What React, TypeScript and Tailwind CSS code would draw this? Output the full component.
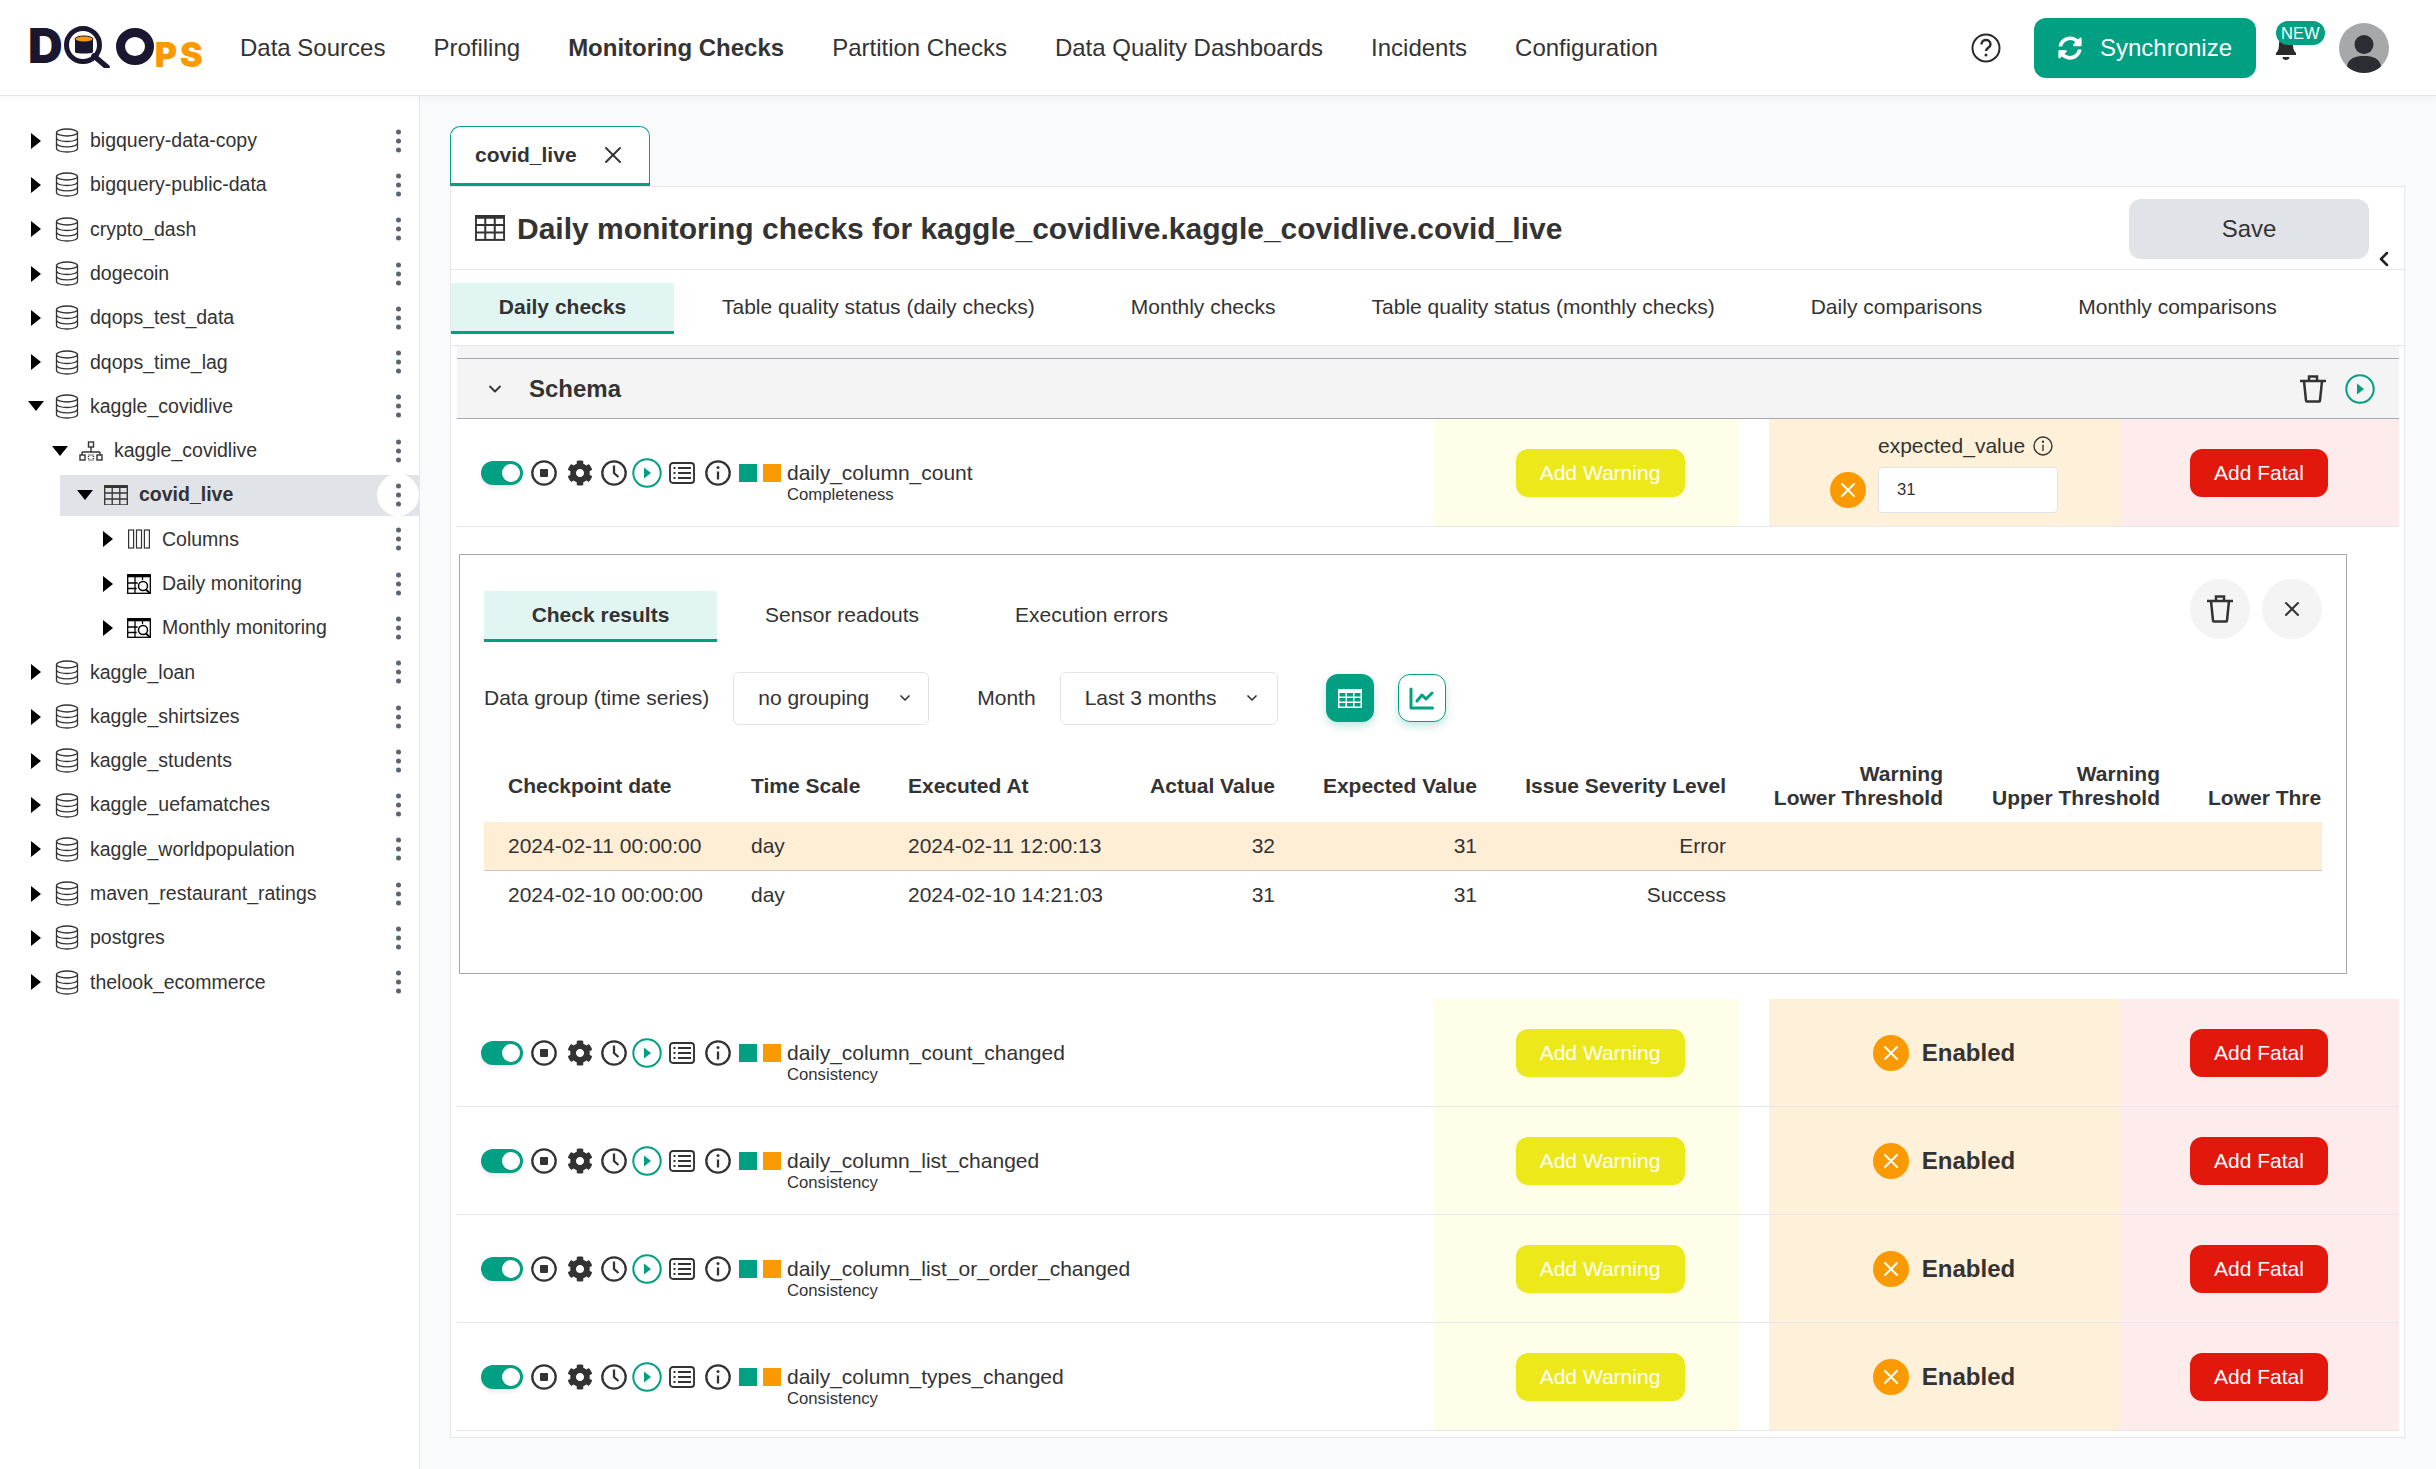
import React from "react";
import { ChevronDown, ChevronLeft, X } from "lucide-react";

const T = "#02a083";
const ff = "font-['Liberation_Sans',Arial,sans-serif]";

function Caret({ open }: { open?: boolean }) {
  return open ? (
    <svg width="16" height="10" viewBox="0 0 16 10" className="block"><path d="M0 0h16L8 10z" fill="#000" /></svg>
  ) : (
    <svg width="10" height="16" viewBox="0 0 10 16" className="block"><path d="M0 0v16l10-8z" fill="#000" /></svg>
  );
}
function Db() {
  return (
    <svg width="24" height="25" viewBox="0 0 24 25" fill="none" stroke="#333" strokeWidth="1.3">
      <ellipse cx="12" cy="4.500" rx="10.500" ry="3.500" />
      <path d="M1.500 4.500v16c0 2 4.700 3.500 10.500 3.500s10.500-1.500 10.500-3.500v-16" />
      <path d="M1.500 10c0 2 4.700 3.500 10.500 3.500S22.500 12 22.500 10M1.500 15.300c0 2 4.700 3.500 10.500 3.500s10.500-1.500 10.500-3.500" />
    </svg>
  );
}
function Schema() {
  return (
    <svg width="24" height="20" viewBox="0 0 24 20" fill="none" stroke="#333" strokeWidth="1.4">
      <rect x="9.500" y="1" width="5" height="5" />
      <path d="M12 6v5M3 11h18M3 11v3M21 11v3" />
      <rect x="1" y="14" width="5" height="5" /><rect x="18" y="14" width="5" height="5" />
      <path d="M9.500 14h5v5h-5z" strokeDasharray="1 1" />
    </svg>
  );
}
function TableIco({ w = 24, sw = 1.3 }: { w?: number; sw?: number }) {
  return (
    <svg width={w} height={w * 0.86} viewBox="0 0 24 20.600" fill="none" stroke="#333" strokeWidth={sw}>
      <rect x=".7" y=".7" width="22.600" height="19.200" />
      <path d="M.7 1.800h22.600" strokeWidth="2.400" />
      <path d="M.7 8h22.600M.7 14h22.600M8.200 1v19M15.800 1v19" />
    </svg>
  );
}
function SolidTable() {
  return (
    <svg width="24" height="19" viewBox="0 0 24 19">
      <rect width="24" height="19" fill="#fff" />
      {[0, 1, 2].map((r) =>
        [0, 1, 2].map((c) => <rect key={`${r}${c}`} x={1.500 + c * 7.500} y={4 + r * 5} width="6" height="3.500" fill={T} />)
      )}
    </svg>
  );
}
function ColumnsIco() {
  return (
    <svg width="22" height="20" viewBox="0 0 22 20" fill="none" stroke="#333" strokeWidth="1.200">
      <rect x=".6" y="1" width="5" height="18" /><rect x="8.500" y="1" width="5" height="18" /><rect x="16.400" y="1" width="5" height="18" />
    </svg>
  );
}
function MonIco() {
  return (
    <svg width="24" height="20" viewBox="0 0 24 20" fill="none" stroke="#000" strokeWidth="1.300">
      <rect x=".7" y=".7" width="22.600" height="18.600" />
      <path d="M.7 2h22.600" strokeWidth="2.600" />
      <path d="M.7 9h10M.7 14.500h9M8 1v18M15.500 1v5" />
      <circle cx="16" cy="12" r="4.500" fill="#fff" strokeWidth="1.500" />
      <path d="M19 15.500l4 4" strokeWidth="1.800" />
    </svg>
  );
}
function Dots() {
  return (
    <span className="flex flex-col gap-[4px]">
      <i className="block size-[5px] rounded-full bg-[#5b6470]" />
      <i className="block size-[5px] rounded-full bg-[#5b6470]" />
      <i className="block size-[5px] rounded-full bg-[#5b6470]" />
    </span>
  );
}

type Node = { l: number; t: string; open?: boolean; ic?: "db" | "schema" | "table" | "col" | "mon"; sel?: boolean };
const tree: Node[] = [
  { l: 0, t: "bigquery-data-copy" },
  { l: 0, t: "bigquery-public-data" },
  { l: 0, t: "crypto_dash" },
  { l: 0, t: "dogecoin" },
  { l: 0, t: "dqops_test_data" },
  { l: 0, t: "dqops_time_lag" },
  { l: 0, t: "kaggle_covidlive", open: true },
  { l: 1, t: "kaggle_covidlive", open: true, ic: "schema" },
  { l: 2, t: "covid_live", open: true, ic: "table", sel: true },
  { l: 3, t: "Columns", ic: "col" },
  { l: 3, t: "Daily monitoring", ic: "mon" },
  { l: 3, t: "Monthly monitoring", ic: "mon" },
  { l: 0, t: "kaggle_loan" },
  { l: 0, t: "kaggle_shirtsizes" },
  { l: 0, t: "kaggle_students" },
  { l: 0, t: "kaggle_uefamatches" },
  { l: 0, t: "kaggle_worldpopulation" },
  { l: 0, t: "maven_restaurant_ratings" },
  { l: 0, t: "postgres" },
  { l: 0, t: "thelook_ecommerce" },
];
const indent = ["pl-[26px]", "pl-[50px]", "pl-[74px]", "pl-[98px]"];

function Tree() {
  return (
    <aside className="w-[420px] shrink-0 border-r-[1.500px] border-[#e5e7eb] bg-white pt-[22.500px]">
      {tree.map((n, i) => (
        <div key={i} className="relative flex h-[44.300px] items-center">
          <div className={`flex h-[41px] flex-1 items-center ${n.sel ? "ml-[60px] bg-[#e0e3e8] pl-[15px]" : indent[n.l]}`}>
            <span className="flex w-[20px] shrink-0 justify-center"><Caret open={n.open} /></span>
            <span className="ml-[9px] flex w-[24px] shrink-0 justify-center">
              {n.ic === "schema" ? <Schema /> : n.ic === "table" ? <TableIco /> : n.ic === "col" ? <ColumnsIco /> : n.ic === "mon" ? <MonIco /> : <Db />}
            </span>
            <span className={`ml-[11px] text-[19.500px] text-[#333] ${n.sel ? "font-bold" : ""}`}>{n.t}</span>
          </div>
          {n.sel && <span className="absolute left-[377px] top-[1px] size-[42px] rounded-full bg-white" />}
          <span className="absolute left-[395.500px] top-1/2 -translate-y-1/2"><Dots /></span>
        </div>
      ))}
    </aside>
  );
}

function Logo() {
  return (
    <div className="ml-[28px] flex h-[40px] w-[175px] items-start font-['Inter',sans-serif] font-black">
      <span className="block h-[35px] text-[48px] leading-[35px] text-[#1b1730]">D</span>
      <svg width="50" height="42" viewBox="0 0 50 42" className="-mt-[2px] shrink-0">
        <circle cx="20" cy="19" r="16.500" fill="none" stroke="#1b1730" strokeWidth="5" />
        <path d="M31 30l13 11" stroke="#1b1730" strokeWidth="5.500" strokeLinecap="round" />
        <path d="M12 13h18v13c0 2-18 2-18 0z" fill="#1b1730" />
        <ellipse cx="21" cy="13" rx="9" ry="3" fill="#fb9a00" stroke="#1b1730" strokeWidth="1" />
      </svg>
      <svg width="38" height="37" viewBox="0 0 38 37" className="ml-[3px] shrink-0">
        <ellipse cx="19" cy="18.500" rx="14.500" ry="14" fill="none" stroke="#1b1730" strokeWidth="9" />
      </svg>
      <span className="ml-[1px] mt-[14px] block h-[25px] text-[34px] leading-[25px] tracking-[3px] text-[#fb9a00]">PS</span>
    </div>
  );
}

function Help() {
  return (
    <svg width="30" height="30" viewBox="0 0 30 30" fill="none" stroke="#2b2b2b" strokeWidth="2">
      <circle cx="15" cy="15" r="13.500" />
      <path d="M10.500 11.500c0-6 9-6 9 0 0 3.500-4.500 3-4.500 6.500" strokeWidth="2.400" />
      <circle cx="15" cy="22" r="1.500" fill="#2b2b2b" stroke="none" />
    </svg>
  );
}
function Sync() {
  return (
    <svg width="24" height="24" viewBox="0 0 512 512" fill="#fff">
      <path d="M370.720 133.280C339.458 104.008 298.888 87.962 255.848 88c-77.458.068-144.328 53.178-162.791 126.850-1.344 5.363-6.122 9.150-11.651 9.150H24.103c-7.498 0-13.194-6.807-11.807-14.176C33.933 94.924 134.813 8 256 8c66.448 0 126.791 26.136 171.315 68.685L463.030 40.970C478.149 25.851 504 36.559 504 57.941V192c0 13.255-10.745 24-24 24H345.941c-21.382 0-32.090-25.851-16.971-40.971l41.750-41.749zM32 296h134.059c21.382 0 32.090 25.851 16.971 40.971l-41.750 41.750c31.262 29.273 71.835 45.319 114.876 45.280 77.418-.070 144.315-53.144 162.787-126.849 1.344-5.363 6.122-9.150 11.651-9.150h57.304c7.498 0 13.194 6.807 11.807 14.176C478.067 417.076 377.187 504 256 504c-66.448 0-126.791-26.136-171.315-68.685L48.970 471.030C33.851 486.149 8 475.441 8 454.059V320c0-13.255 10.745-24 24-24z" />
    </svg>
  );
}
function Bell() {
  return (
    <svg width="22" height="30" viewBox="0 0 22 30" fill="#2b2b2b">
      <path d="M1 20c2-2 3-4 3-9 0-4 3-7 7-7s7 3 7 7c0 5 1 7 3 9v2H1z" />
      <path d="M7.500 24h7c0 4-7 4-7 0z" />
    </svg>
  );
}
function Avatar() {
  return (
    <svg width="50" height="50" viewBox="0 0 50 50">
      <circle cx="25" cy="25" r="25" fill="#a7a8aa" />
      <circle cx="25" cy="21.500" r="9.500" fill="#2c2c33" />
      <path d="M8 43.500c1-8 8-10.500 17-10.500s16 2.500 17 10.500A25 25 0 0 1 25 50 25 25 0 0 1 8 43.500z" fill="#2c2c33" />
    </svg>
  );
}

function Header() {
  const items = ["Data Sources", "Profiling", "Monitoring Checks", "Partition Checks", "Data Quality Dashboards", "Incidents", "Configuration"];
  return (
    <header className="relative z-10 flex h-[96px] items-center border-b-[1.500px] border-[#e5e7eb] bg-white shadow-[0_2px_8px_rgba(0,0,0,0.04)]">
      <Logo />
      <nav className="ml-[37px] flex gap-[48px]">
        {items.map((t) => (
          <span key={t} className={`text-[24px] text-[#333] ${t === "Monitoring Checks" ? "font-bold" : ""}`}>{t}</span>
        ))}
      </nav>
      <div className="ml-auto flex items-center">
        <Help />
        <button className="ml-[33px] flex h-[60px] w-[222px] items-center justify-center gap-[18px] rounded-[12px] bg-[#02a083] text-[24px] text-white">
          <Sync />Synchronize
        </button>
        <div className="relative ml-[20px] h-[50px] w-[63px]">
          <span className="absolute left-[-1px] top-[10px]"><Bell /></span>
          <span className="absolute left-[0px] top-[-2px] rounded-full bg-[#02a083] px-[5px] text-[16.500px] leading-[24px] text-white">NEW</span>
        </div>
        <span className="mr-[47px] block"><Avatar /></span>
      </div>
    </header>
  );
}

function Stop() {
  return (
    <svg width="26" height="26" viewBox="0 0 26 26" fill="none" stroke="#333" strokeWidth="2.300">
      <circle cx="13" cy="13" r="11.700" /><rect x="9" y="9" width="8" height="8" rx="1" fill="#333" stroke="none" />
    </svg>
  );
}
function Gear() {
  return (
    <svg width="26" height="26" viewBox="0 0 512 512" fill="#333">
      <path d="M487.400 315.700l-42.600-24.600c4.300-23.200 4.300-47 0-70.200l42.600-24.600c4.900-2.800 7.100-8.600 5.500-14-11.100-35.600-30-67.800-54.700-94.600-3.800-4.100-10-5.100-14.800-2.300L380.800 110c-17.900-15.400-38.500-27.300-60.800-35.100V25.800c0-5.600-3.900-10.500-9.400-11.700-36.700-8.200-74.300-7.800-109.200 0-5.500 1.200-9.400 6.100-9.400 11.700V75c-22.200 7.900-42.800 19.800-60.800 35.100L88.700 85.500c-4.900-2.800-11-1.900-14.800 2.300-24.700 26.700-43.600 58.900-54.700 94.600-1.700 5.400.6 11.200 5.500 14L67.300 221c-4.300 23.200-4.300 47 0 70.200l-42.600 24.600c-4.900 2.800-7.100 8.600-5.500 14 11.100 35.600 30 67.800 54.700 94.600 3.800 4.100 10 5.100 14.800 2.300l42.600-24.600c17.900 15.400 38.500 27.300 60.800 35.100v49.200c0 5.600 3.900 10.500 9.400 11.700 36.700 8.200 74.300 7.800 109.200 0 5.500-1.200 9.400-6.100 9.400-11.700v-49.200c22.200-7.900 42.800-19.800 60.800-35.100l42.600 24.600c4.900 2.800 11 1.900 14.800-2.300 24.700-26.700 43.600-58.900 54.700-94.600 1.500-5.500-.7-11.300-5.600-14.100zM256 336c-44.100 0-80-35.900-80-80s35.900-80 80-80 80 35.900 80 80-35.900 80-80 80z" />
    </svg>
  );
}
function Clock() {
  return (
    <svg width="26" height="26" viewBox="0 0 26 26" fill="none" stroke="#333" strokeWidth="2.300">
      <circle cx="13" cy="13" r="11.700" /><path d="M13 5.500V13l4.500 4" />
    </svg>
  );
}
function Play({ s = 30 }: { s?: number }) {
  return (
    <svg width={s} height={s} viewBox="0 0 30 30" fill="none" stroke={T} strokeWidth="2">
      <circle cx="15" cy="15" r="13.700" /><path d="M12 9.500v11l7-5.500z" fill={T} stroke="none" />
    </svg>
  );
}
function ListI() {
  return (
    <svg width="26" height="22" viewBox="0 0 26 22" fill="none" stroke="#333" strokeWidth="1.900">
      <rect x="1" y="1" width="24" height="20" rx="3" />
      <path d="M9 6h13M9 11h13M9 16h13" /><path d="M4.500 6h2M4.500 11h2M4.500 16h2" strokeWidth="2.200" />
    </svg>
  );
}
function Info({ s = 26, w = 2.300 }: { s?: number; w?: number }) {
  return (
    <svg width={s} height={s} viewBox="0 0 26 26" fill="none" stroke="#333" strokeWidth={w}>
      <circle cx="13" cy="13" r="11.700" /><path d="M13 11.500v8" /><circle cx="13" cy="7.500" r="1.500" fill="#333" stroke="none" />
    </svg>
  );
}
function Bin({ s = 28 }: { s?: number }) {
  return (
    <svg width={s} height={s} viewBox="0 0 28 28" fill="none" stroke="#333" strokeWidth="2.500">
      <path d="M1 6h26M5 6l2 19.500a1 1 0 0 0 1 1h12a1 1 0 0 0 1-1L23 6" />
      <path d="M10 6V1.500h8V6" />
    </svg>
  );
}

function XCircle({ s = 36 }: { s?: number }) {
  return (
    <span className="flex shrink-0 items-center justify-center rounded-full bg-[#fb9a00]" style={{ width: s, height: s }}>
      <X size={24} color="#fff" strokeWidth={2} />
    </span>
  );
}

function CheckName({ name, sub }: { name: string; sub: string }) {
  return (
    <div className="flex w-[976px] shrink-0 items-center pl-[24px]">
      <div className="flex h-[30px] items-center">
        <span className="relative block h-[24px] w-[42px] rounded-full bg-[#02a083] shadow-[0_3px_4px_rgba(0,0,0,0.08)]">
          <span className="absolute right-[3px] top-[3px] size-[18px] rounded-full bg-white" />
        </span>
        <span className="ml-[8px] flex w-[26px] justify-center"><Stop /></span>
        <span className="ml-[10px] flex w-[26px] justify-center"><Gear /></span>
        <span className="ml-[8px] flex w-[26px] justify-center"><Clock /></span>
        <span className="ml-[5px] flex w-[30px] justify-center"><Play /></span>
        <span className="ml-[7px] flex w-[26px] justify-center"><ListI /></span>
        <span className="ml-[10px] flex w-[26px] justify-center"><Info /></span>
        <span className="ml-[8px] block size-[18px] bg-[#02a083]" />
        <span className="ml-[6px] block size-[18px] bg-[#fb9a00]" />
      </div>
      <div className="ml-[6px] pt-[16px] text-[#333]">
        <div className="text-[21px] leading-[28px]">{name}</div>
        <div className="text-[16.700px] leading-[15px]">{sub}</div>
      </div>
    </div>
  );
}

function Row({ name, sub, err }: { name: string; sub: string; err: React.ReactNode }) {
  return (
    <div className="flex h-[108px] border-b-[1.500px] border-[#e5e7eb] bg-white">
      <CheckName name={name} sub={sub} />
      <div className="flex w-[306px] items-center justify-center bg-[#fefee9] pl-[28px]">
        <button className="h-[48px] w-[169px] rounded-[12px] bg-[#ede81a] text-[21px] text-white">Add Warning</button>
      </div>
      <div className="w-[30px]" />
      <div className="flex w-[350px] items-center justify-center bg-[#fff0d9]">{err}</div>
      <div className="flex w-[280px] items-center justify-center bg-[#feecec]">
        <button className="h-[48px] w-[138px] rounded-[12px] bg-[#e2180c] text-[21px] text-white">Add Fatal</button>
      </div>
    </div>
  );
}

const Enabled = (
  <div className="flex items-center gap-[13px]">
    <XCircle />
    <span className="text-[24px] font-bold text-[#333]">Enabled</span>
  </div>
);

function Filter({ w, t, chev }: { w: string; t: string; chev: string }) {
  return (
    <div className={`relative flex h-[53px] ${w} items-center rounded-[6px] border-[1.500px] border-[#e0e3e8] bg-white pl-[24px] text-[21px] text-[#333]`}>
      {t}
      <ChevronDown size={16} strokeWidth={2.500} color="#333" className={`absolute ${chev}`} />
    </div>
  );
}

const cols = "grid-cols-[243px_157px_245px_170px_202px_249px_217px_217px_220px]";

function Results() {
  return (
    <div className="ml-[2px] h-[420px] w-[1888px] border-[1.500px] border-[#a5a8af] bg-white px-[24px] pt-[36px]">
      <div className="flex items-start">
        <div className="flex h-[51px] w-[233px] items-center justify-center border-b-[3px] border-[#02a083] bg-[#e1f5f2] text-[21px] font-bold text-[#333]">Check results</div>
        <div className="flex h-[48px] items-center pl-[48px] text-[21px] text-[#333]">Sensor readouts</div>
        <div className="flex h-[48px] items-center pl-[96px] text-[21px] text-[#333]">Execution errors</div>
        <div className="ml-auto -mt-[12px] flex gap-[12px]">
          <span className="flex size-[60px] items-center justify-center rounded-full bg-[#f4f4f4]"><Bin /></span>
          <span className="flex size-[60px] items-center justify-center rounded-full bg-[#f4f4f4]"><X size={24} color="#333" /></span>
        </div>
      </div>
      <div className="mt-[30px] flex items-center text-[21px] text-[#333]">
        <span>Data group (time series)</span>
        <span className="ml-[24px]"><Filter w="w-[196px]" t="no grouping" chev="right-[15px]" /></span>
        <span className="ml-[48px]">Month</span>
        <span className="ml-[24px]"><Filter w="w-[218px]" t="Last 3 months" chev="right-[17px]" /></span>
        <span className="ml-[48px] flex size-[48px] items-center justify-center rounded-[12px] bg-[#02a083] shadow-[0_4px_8px_rgba(2,160,131,0.25)]">
          <SolidTable />
        </span>
        <span className="ml-[24px] flex size-[48px] items-center justify-center rounded-[12px] border-[1.500px] border-[#02a083] bg-white shadow-[0_4px_8px_rgba(2,160,131,0.25)]">
          <svg width="25" height="23" viewBox="0 0 25 23" fill="none" stroke="#02a083" strokeWidth="3" strokeLinecap="round" strokeLinejoin="round">
            <path d="M2 2v19h21.500" /><path d="M8 14l5-6 4 4 6-6" />
          </svg>
        </span>
      </div>
      <div className="mt-[25px] overflow-hidden">
        <div className={`grid ${cols} h-[72px] w-[1920px] items-center whitespace-nowrap text-[21px] font-bold leading-[24px] text-[#333]`}>
          <div className="px-[24px]">Checkpoint date</div>
          <div className="px-[24px]">Time Scale</div>
          <div className="px-[24px]">Executed At</div>
          <div className="pr-[24px] text-right">Actual Value</div>
          <div className="pr-[24px] text-right">Expected Value</div>
          <div className="pr-[24px] text-right">Issue Severity Level</div>
          <div className="pr-[24px] text-right">Warning<br />Lower Threshold</div>
          <div className="pr-[24px] text-right">Warning<br />Upper Threshold</div>
          <div className="px-[24px] pt-[24px]">Lower Threshold</div>
        </div>
        <div className={`grid ${cols} h-[49px] w-[1920px] items-center border-b-[1.500px] border-[#c4c6ca] bg-[#ffeed6] text-[21px] text-[#333]`}>
          <div className="px-[24px]">2024-02-11 00:00:00</div>
          <div className="px-[24px]">day</div>
          <div className="px-[24px]">2024-02-11 12:00:13</div>
          <div className="px-[24px] text-right">32</div>
          <div className="px-[24px] text-right">31</div>
          <div className="px-[24px] text-right">Error</div>
        </div>
        <div className={`grid ${cols} h-[48px] w-[1920px] items-center text-[21px] text-[#333]`}>
          <div className="px-[24px]">2024-02-10 00:00:00</div>
          <div className="px-[24px]">day</div>
          <div className="px-[24px]">2024-02-10 14:21:03</div>
          <div className="px-[24px] text-right">31</div>
          <div className="px-[24px] text-right">31</div>
          <div className="px-[24px] text-right">Success</div>
        </div>
      </div>
    </div>
  );
}

function Main() {
  const tabs = ["Table quality status (daily checks)", "Monthly checks", "Table quality status (monthly checks)", "Daily comparisons", "Monthly comparisons"];
  return (
    <main className="relative flex-1 overflow-hidden bg-[#f9fafb] pl-[30px] pr-[31px] pt-[30px]">
      <div className="flex h-[60px] w-[200px] items-center rounded-t-[10px] border-x-[1.500px] border-b-[3px] border-t-[1.500px] border-[#02a083] bg-white pl-[24px] text-[21px] font-bold text-[#333]">
        covid_live
        <X size={28} color="#333" strokeWidth={1.600} className="ml-[22px]" />
      </div>
      <section className="relative border-[1.500px] border-t-0 border-[#e5e7eb] bg-white">
        <div className="relative flex h-[84px] items-center justify-between border-y-[1.500px] border-[#e5e7eb] pl-[24px] pr-[35px]">
          <div className="flex items-center gap-[12px]">
            <TableIco w={30} sw={1.600} />
            <h1 className="text-[30px] font-bold text-[#333]">Daily monitoring checks for kaggle_covidlive.kaggle_covidlive.covid_live</h1>
          </div>
          <button className="mt-[1px] h-[60px] w-[240px] rounded-[12px] bg-[#e0e3e8] text-[24px] text-[#333]">Save</button>
          <ChevronLeft size={24} color="#222" strokeWidth={2.500} className="absolute bottom-[-2px] right-[8px]" />
        </div>
        <div className="flex h-[76px] items-start border-b-[1.500px] border-[#e5e7eb] pt-[13px]">
          <div className="flex h-[51px] w-[223px] items-center justify-center border-b-[3px] border-[#02a083] bg-[#e1f5f2] text-[21px] font-bold text-[#333]">Daily checks</div>
          {tabs.map((t) => (
            <div key={t} className="flex h-[48px] items-center px-[48px] text-[21px] text-[#333]">{t}</div>
          ))}
        </div>
        <div className="pl-[6px] pr-[5px]">
          <div className="bg-[#f4f4f4] pt-[12px]">
            <div className="flex h-[61px] items-center border-y-[1.500px] border-[#a5a8af] pl-[28px] pr-[24px]">
              <ChevronDown size={20} strokeWidth={2.200} color="#333" />
              <span className="ml-[24px] text-[24px] font-bold text-[#333]">Schema</span>
              <span className="ml-auto"><Bin /></span>
              <span className="ml-[18px]"><Play /></span>
            </div>
          </div>
          <Row
            name="daily_column_count"
            sub="Completeness"
            err={
              <div className="flex items-end gap-[12px] pb-[2px]">
                <span className="mb-[5px]"><XCircle /></span>
                <div>
                  <div className="mb-[5px] flex items-center gap-[8px] text-[21px] text-[#333]">expected_value <Info s={20} w={1.800} /></div>
                  <div className="flex h-[46px] w-[180px] items-center rounded-[4px] border-[1.500px] border-[#e0e3e8] bg-white pl-[18px] text-[16.700px] text-[#333]">31</div>
                </div>
              </div>
            }
          />
          <div className="h-[472px] pt-[26.500px]"><Results /></div>
          <Row name="daily_column_count_changed" sub="Consistency" err={Enabled} />
          <Row name="daily_column_list_changed" sub="Consistency" err={Enabled} />
          <Row name="daily_column_list_or_order_changed" sub="Consistency" err={Enabled} />
          <Row name="daily_column_types_changed" sub="Consistency" err={Enabled} />
          <div className="h-[6px]" />
        </div>
      </section>
    </main>
  );
}

export default function App() {
  return (
    <div className={`flex h-[1469px] w-[2436px] flex-col overflow-hidden bg-white ${ff}`}>
      <Header />
      <div className="flex min-h-0 flex-1">
        <Tree />
        <Main />
      </div>
    </div>
  );
}
